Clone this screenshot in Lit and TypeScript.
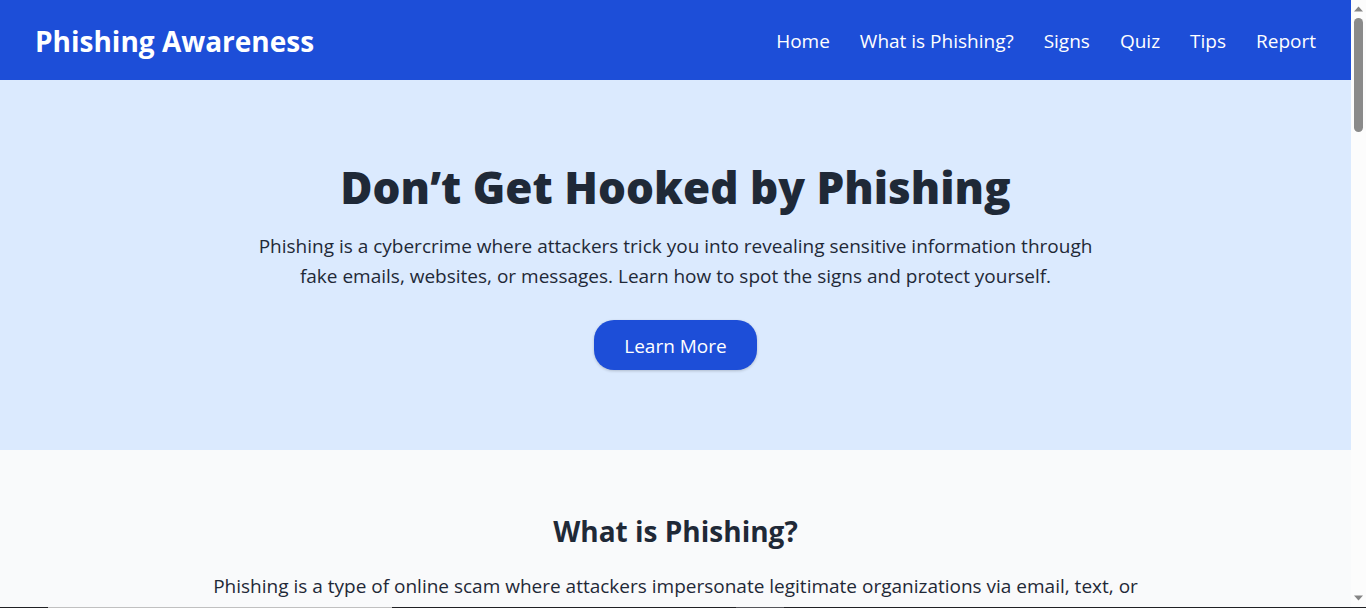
import { LitElement, html, css } from "lit";
import { customElement } from "lit/decorators.js";

const LINKS = [
  { label: "Home", href: "#home" },
  { label: "What is Phishing?", href: "#what" },
  { label: "Signs", href: "#signs" },
  { label: "Quiz", href: "#quiz" },
  { label: "Tips", href: "#tips" },
  { label: "Report", href: "#report" },
];

@customElement("app-root")
export class AppRoot extends LitElement {
  static styles = css`
    :host {
      display: grid;
      grid-template-rows: minmax(0, 1fr) 1px;
      height: 100vh;
      overflow: hidden;
      font-family: "Segoe UI", "Open Sans", "Noto Sans", sans-serif;
      font-size: 19px;
      line-height: 30px;
      color: #1f2937;
      background: #f9fafb;
    }
    .window {
      display: grid;
      grid-template-columns: minmax(0, 1fr) 15px;
      min-height: 0;
    }
    .page {
      overflow: hidden;
      min-height: 0;
    }
    header {
      display: flex;
      justify-content: space-between;
      align-items: center;
      padding: 21px 35px 19px;
      background: #1d4ed8;
      color: #fff;
    }
    .brand {
      margin: 0;
      font-size: 28px;
      line-height: 40px;
      font-weight: 700;
    }
    nav {
      display: flex;
      gap: 30px;
    }
    a {
      color: inherit;
      text-decoration: none;
    }
    .hero {
      display: flex;
      flex-direction: column;
      align-items: center;
      padding: 80px 20px;
      background: #dbeafe;
      text-align: center;
    }
    h2,
    h3,
    p {
      margin: 0;
    }
    .headline {
      font-size: 44px;
      line-height: 54px;
      font-weight: 800;
      margin-bottom: 17px;
    }
    .lead {
      max-width: 840px;
      margin-bottom: 29px;
    }
    .cta {
      font: inherit;
      color: #fff;
      background: #1d4ed8;
      border: 0;
      border-radius: 20px;
      padding: 11px 30px 9px;
      box-shadow: 0 1px 3px rgba(0, 0, 0, 0.2);
      cursor: pointer;
    }
    .about {
      padding: 61px 20px;
      text-align: center;
    }
    .section-title {
      font-size: 28px;
      line-height: 40px;
      font-weight: 700;
      margin-bottom: 20px;
    }
    .scrollbar {
      display: flex;
      flex-direction: column;
      align-items: center;
      gap: 6px;
      padding: 6px 0;
      background: #fcfcfc;
    }
    .arrow {
      width: 9px;
      height: 6px;
      fill: #858585;
    }
    .track {
      flex: 1;
      align-self: stretch;
      display: flex;
      justify-content: center;
    }
    .thumb {
      width: 9px;
      height: 20%;
      border-radius: 5px;
      background: #8a8a8a;
    }
    .edge {
      display: grid;
      grid-template-columns: 48px 344px 344px 48px 1fr;
      background: #202124;
    }
    .active {
      grid-column: 2;
      background: #c0c0c0;
    }
    .hint {
      grid-column: 4;
      background: #55565a;
    }
  `;

  render() {
    return html`
      <div class="window">
        <div class="page">
          <header>
            <h1 class="brand">Phishing Awareness</h1>
            <nav aria-label="Main">
              ${LINKS.map((l) => html`<a href=${l.href}>${l.label}</a>`)}
            </nav>
          </header>
          <main>
            <section class="hero" id="home">
              <h2 class="headline">Don’t Get Hooked by Phishing</h2>
              <p class="lead">
                Phishing is a cybercrime where attackers trick you into
                revealing sensitive information through fake emails, websites,
                or messages. Learn how to spot the signs and protect yourself.
              </p>
              <button class="cta" type="button">Learn More</button>
            </section>
            <section class="about" id="what">
              <h3 class="section-title">What is Phishing?</h3>
              <p>
                Phishing is a type of online scam where attackers impersonate
                legitimate organizations via email, text, or
              </p>
            </section>
          </main>
        </div>
        <div class="scrollbar" aria-hidden="true">
          <svg class="arrow" viewBox="0 0 9 6"><path d="M4.5 0.5 9 5.5H0z" /></svg>
          <div class="track"><div class="thumb"></div></div>
          <svg class="arrow" viewBox="0 0 9 6"><path d="M4.5 5.5 9 0.5H0z" /></svg>
        </div>
      </div>
      <div class="edge" aria-hidden="true">
        <span class="active"></span>
        <span class="hint"></span>
      </div>
    `;
  }
}
